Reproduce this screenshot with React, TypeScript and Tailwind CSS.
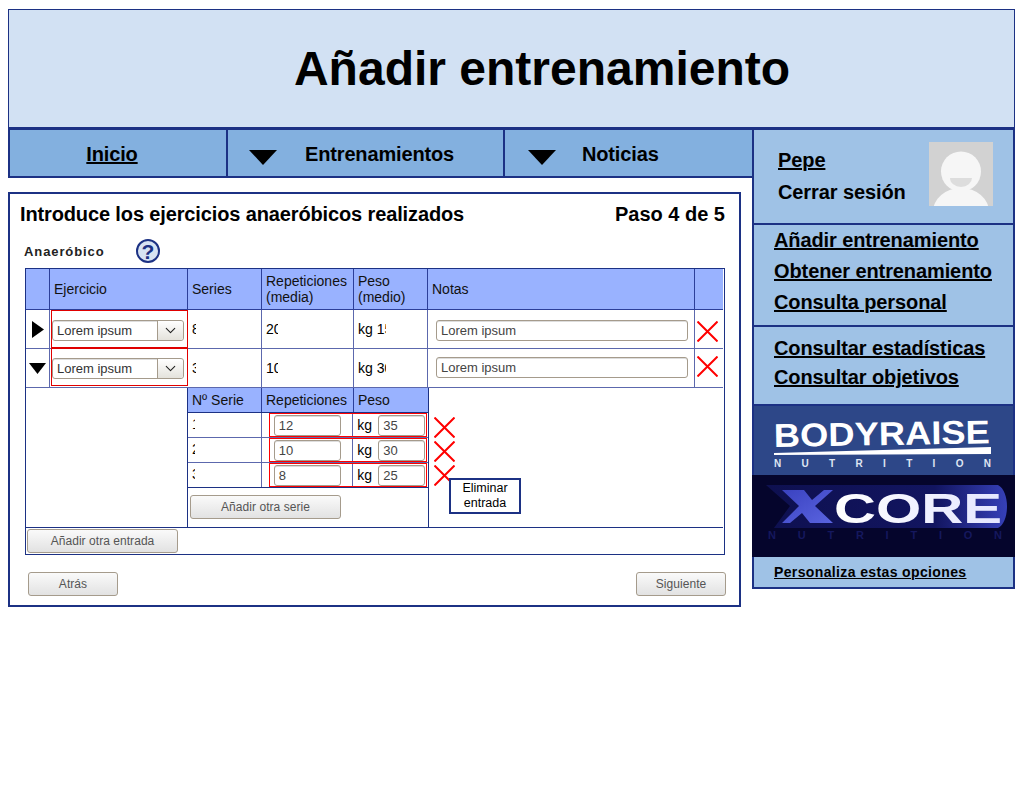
import React from 'react';
import { ChevronDown } from 'lucide-react';

const Cross = () => (
  <svg width="21" height="21" viewBox="0 0 21 21" className="block">
    <path d="M0.5 0.5 L20.5 20.5 M20.5 0.5 L0.5 20.5" stroke="#ff0000" strokeWidth="2" fill="none" />
  </svg>
);

const NavArrow = () => (
  <svg width="28" height="15" viewBox="0 0 28 15" className="block">
    <path d="M0 0 H28 L14 15 Z" fill="#000" />
  </svg>
);

const Select = () => (
  <div className="flex h-[21px] w-[132px] rounded-[3px] border border-[#a59b8c] bg-white text-[13px] text-[#333] shadow-[inset_0_1px_0_#ddd]">
    <span className="flex-1 pl-[4px] leading-[19px]">Lorem ipsum</span>
    <span className="flex w-[26px] items-center justify-center rounded-r-[3px] border-l border-[#a59b8c] bg-gradient-to-b from-white to-[#e4e2dc]">
      <ChevronDown size={17} strokeWidth={1.5} color="#222" />
    </span>
  </div>
);

const Input = ({ value, className }: { value: string; className: string }) => (
  <div className={`h-[21px] rounded-[3px] border border-[#a59b8c] bg-white pl-[4px] text-[13px] leading-[19px] text-[#444] shadow-[inset_0_1px_0_#ddd] ${className}`}>
    {value}
  </div>
);

const Button = ({ label, className }: { label: string; className: string }) => (
  <div className={`flex h-[24px] items-center justify-center rounded-[3px] border border-[#a59b8c] bg-gradient-to-b from-[#fafafa] to-[#e2e2e2] text-[12px] tracking-[0.05px] text-[#555] ${className}`}>
    {label}
  </div>
);

const Clipped = ({ text, w }: { text: string; w: string }) => (
  <span className={`block overflow-hidden whitespace-nowrap ${w}`}>{text}</span>
);

interface MainRowProps {
  arrow: React.ReactNode;
  series: string;
  reps: string;
  peso: string;
  boxClass: string;
  noteClass: string;
  crossClass: string;
}

const MainRow = ({ arrow, series, reps, peso, boxClass, noteClass, crossClass }: MainRowProps) => (
  <div className="flex h-[39px] border-b border-[#5c68ad] text-[14px] leading-[38px] text-black">
    <div className="flex w-[24px] items-center justify-center border-r border-[#5c68ad]">{arrow}</div>
    <div className="w-[138px] pl-[1px]">
      <div className={`relative border border-[#e00000] ${boxClass}`}>
        <Select />
      </div>
    </div>
    <div className="w-[74px] border-r border-[#5c68ad] pl-[4px]">
      <Clipped text={series} w="w-[4px]" />
    </div>
    <div className="w-[92px] border-r border-[#5c68ad] pl-[4px]">
      <Clipped text={reps} w="w-[12px]" />
    </div>
    <div className="w-[74px] border-r border-[#5c68ad] pl-[4px]">
      <Clipped text={peso} w="w-[28px]" />
    </div>
    <div className={`w-[267px] border-r border-[#5c68ad] pl-[8px] ${noteClass}`}>
      <Input value="Lorem ipsum" className="w-[252px]" />
    </div>
    <div className={`w-[28px] pl-[2px] ${crossClass}`}>
      <Cross />
    </div>
  </div>
);

const SubRow = ({ n, reps, peso, last }: { n: string; reps: string; peso: string; last?: boolean }) => (
  <div className={`relative flex h-[25px] border-b text-[14px] leading-[22px] text-black ${last ? 'border-[#1c3184]' : 'border-[#5c68ad]'}`}>
    <div className="w-[74px] border-r border-[#5c68ad] pl-[4px]">
      <Clipped text={n} w="w-[3px]" />
    </div>
    <div className="flex w-[92px] items-center border-r border-[#5c68ad] pl-[12px]">
      <Input value={reps} className="w-[67px]" />
    </div>
    <div className="flex w-[75px] items-center pl-[4px]">
      <span className="w-[21px] leading-[24px]">kg</span>
      <Input value={peso} className="w-[47px]" />
    </div>
    <div className="absolute left-[81px] right-[1px] top-0 h-[24px] border border-[#ff0000]" />
  </div>
);

const HeadCell = ({ w, children, last }: { w: string; children?: React.ReactNode; last?: boolean }) => (
  <div className={`${w} flex items-center pl-[4px] leading-[16px] ${last ? '' : 'border-r border-[#2c3f9a]'}`}>{children}</div>
);

const SideLink = ({ children }: { children: React.ReactNode }) => (
  <div className="text-[20px] font-bold tracking-[-0.1px] text-black underline">{children}</div>
);

export default function App() {
  return (
    <div className="min-h-[800px] bg-white pl-[8px] pt-[9px] font-['Liberation_Sans',Arial,sans-serif]">
      <header className="flex h-[119px] w-[1007px] items-center justify-center border border-[#1c3184] bg-[#d2e1f3] pl-[61px] pt-[1px] text-[48px] font-bold text-black">
        Añadir entrenamiento
      </header>

      <div className="flex w-[1007px]">
        <div className="w-[744px]">
          <nav className="flex h-[50px] border-2 border-r-0 border-[#1c3184] bg-[#83b0df] text-[20px] font-bold tracking-[-0.15px] text-black">
            <div className="flex w-[218px] items-center justify-center border-r-2 border-[#1c3184] pr-[12px] pt-[1px] underline">Inicio</div>
            <div className="flex w-[277px] items-center border-r-2 border-[#1c3184] pl-[21px] pt-[1px]">
              <span className="mt-[8px]"><NavArrow /></span>
              <span className="ml-[28px]">Entrenamientos</span>
            </div>
            <div className="flex flex-1 items-center pl-[23px] pt-[1px]">
              <span className="mt-[8px]"><NavArrow /></span>
              <span className="ml-[26px]">Noticias</span>
            </div>
          </nav>

          <section className="relative mt-[14px] h-[415px] w-[733px] border-2 border-[#1c3184] bg-white">
            <div className="flex justify-between pl-[10px] pr-[14px] pt-[6px] text-[20px] font-bold leading-[28px] text-black">
              <span className="tracking-[-0.13px]">Introduce los ejercicios anaeróbicos realizados</span>
              <span>Paso 4 de 5</span>
            </div>

            <div className="mt-[11px] flex h-[24px] items-center pl-[14px]">
              <span className="mt-[1px] w-[112px] text-[13px] font-bold tracking-[0.9px] text-[#222]">Anaeróbico</span>
              <svg width="24" height="24" viewBox="0 0 24 24" className="block">
                <circle cx="12" cy="12" r="11" fill="#d7e3f3" stroke="#1c3184" strokeWidth="2" />
                <text x="12" y="19.5" textAnchor="middle" fontSize="21" fontWeight="700" fill="#1c3184" fontFamily="Liberation Sans">?</text>
              </svg>
            </div>

            <div className="ml-[15px] mt-[5px] w-[700px] border border-[#1c3184] pr-[1px]">
              <div className="flex h-[41px] w-[697px] border-b border-[#2c3f9a] bg-[#99b2ff] text-[14px] text-[#111]">
                <HeadCell w="w-[24px]" />
                <HeadCell w="w-[138px]">Ejercicio</HeadCell>
                <HeadCell w="w-[74px]">Series</HeadCell>
                <HeadCell w="w-[92px]">Repeticiones<br />(media)</HeadCell>
                <HeadCell w="w-[74px]">Peso<br />(medio)</HeadCell>
                <HeadCell w="w-[267px]">Notas</HeadCell>
                <HeadCell w="w-[28px]" last />
              </div>
              <div className="w-[697px]">
                <MainRow
                  arrow={
                    <svg width="12" height="17" viewBox="0 0 12 17" className="block">
                      <path d="M0 0 L12 8.5 L0 17 Z" fill="#000" />
                    </svg>
                  }
                  series="8"
                  reps="20"
                  peso="kg 15"
                  boxClass="h-[38px] pt-[9px]"
                  noteClass="pt-[10px]"
                  crossClass="pt-[11px]"
                />
                <MainRow
                  arrow={
                    <svg width="17" height="11" viewBox="0 0 17 11" className="block">
                      <path d="M0 0 H17 L8.5 11 Z" fill="#000" />
                    </svg>
                  }
                  series="3"
                  reps="10"
                  peso="kg 30"
                  boxClass="-mt-[1px] h-[38px] pt-[9px]"
                  noteClass="pt-[8px]"
                  crossClass="pt-[7px]"
                />
              </div>

              <div className="relative flex h-[140px] border-b border-[#1c3184]">
                <div className="w-[162px] border-r border-[#1c3184]" />
                <div className="w-[241px] border-r border-[#1c3184]">
                  <div className="flex h-[25px] border-b border-[#1c3184] bg-[#99b2ff] text-[14px] leading-[24px] text-[#111]">
                    <div className="w-[74px] border-r border-[#2c3f9a] pl-[4px]">Nº Serie</div>
                    <div className="w-[92px] border-r border-[#2c3f9a] pl-[4px]">Repeticiones</div>
                    <div className="flex-1 pl-[4px]">Peso</div>
                  </div>
                  <SubRow n="1" reps="12" peso="35" />
                  <SubRow n="2" reps="10" peso="30" />
                  <SubRow n="3" reps="8" peso="25" last />
                  <div className="pl-[2px] pt-[7px]">
                    <Button label="Añadir otra serie" className="w-[151px]" />
                  </div>
                </div>
                <div className="flex flex-col gap-[3px] pl-[5px] pt-[29px]">
                  <Cross />
                  <Cross />
                  <Cross />
                </div>
                <div className="absolute left-[423px] top-[90px] flex h-[36px] w-[72px] items-center justify-center border-2 border-[#1c3184] bg-white text-center text-[12.5px] leading-[15px] text-black">
                  Eliminar<br />entrada
                </div>
              </div>

              <div className="h-[26px] pl-[1px] pt-[1px]">
                <Button label="Añadir otra entrada" className="w-[151px]" />
              </div>
            </div>

            <div className="flex w-[716px] justify-between pl-[18px] pt-[17px]">
              <Button label="Atrás" className="w-[90px]" />
              <Button label="Siguiente" className="w-[90px]" />
            </div>
          </section>
        </div>

        <aside className="w-[263px] self-start border-2 border-[#1c3184] bg-[#9fc2e6]">
          <div className="flex h-[95px] border-b-2 border-[#1c3184] pl-[24px] pt-[12px]">
            <div className="w-[151px] pt-[2px] text-[20px] font-bold leading-[32px] tracking-[-0.1px] text-black">
              <div className="underline">Pepe</div>
              <div>Cerrar sesión</div>
            </div>
            <svg width="64" height="64" viewBox="0 0 64 64" className="block">
              <rect width="64" height="64" fill="#d2d2d2" />
              <ellipse cx="32" cy="70" rx="28" ry="24" fill="#f6f6f6" />
              <circle cx="32" cy="29.5" r="20" fill="#f6f6f6" />
              <path d="M21 36 H43 A11 9 0 0 1 21 36 Z" fill="#dddddd" />
            </svg>
          </div>
          <div className="h-[102px] border-b-2 border-[#1c3184] pl-[20px] leading-[31px]">
            <SideLink>Añadir entrenamiento</SideLink>
            <SideLink>Obtener entrenamiento</SideLink>
            <SideLink>Consulta personal</SideLink>
          </div>
          <div className="h-[79px] border-b-2 border-[#1c3184] pl-[20px] pt-[7px] leading-[29px]">
            <SideLink>Consultar estadísticas</SideLink>
            <SideLink>Consultar objetivos</SideLink>
          </div>
          <svg width="259" height="69" viewBox="0 0 259 69" className="block bg-[#2d4788]">
            <text x="20" y="41" fontFamily="Liberation Sans" fontWeight="700" fontSize="33" fill="#fff" textLength="216" lengthAdjust="spacingAndGlyphs" transform="rotate(-1 20 41)">BODYRAISE</text>
            <path d="M20 47 L237 41 V48 L20 49 Z" fill="#fff" />
            <text x="20" y="61" fontFamily="Liberation Sans" fontWeight="700" fontSize="10" fill="#dfe5f2" textLength="217">NUTRITION</text>
          </svg>
          <svg width="263" height="82" viewBox="0 0 263 82" className="-mx-[2px] block max-w-none bg-[#05052c]">
            <defs>
              <linearGradient id="xcoreBand" x1="0" y1="0" x2="1" y2="0">
                <stop offset="0" stopColor="#0e1050" />
                <stop offset="0.7" stopColor="#121560" />
                <stop offset="1" stopColor="#3640b8" />
              </linearGradient>
              <linearGradient id="xcoreX" x1="0" y1="0" x2="1" y2="1">
                <stop offset="0" stopColor="#3a42c0" />
                <stop offset="1" stopColor="#5a64e0" />
              </linearGradient>
              <linearGradient id="xcoreText" x1="0" y1="0" x2="1" y2="0">
                <stop offset="0" stopColor="#ffffff" />
                <stop offset="1" stopColor="#e4e6ff" />
              </linearGradient>
            </defs>
            <path d="M14 10 H246 C258 16 258 47 246 53 H22 L38 31 Z" fill="url(#xcoreBand)" />
            <path d="M30 15 H52 L60 25 L72 15 H81 L63 31 L81 48 H58 L50 38 L38 48 H30 L47 31 Z" fill="url(#xcoreX)" />
            <text x="82" y="48" fontFamily="Liberation Sans" fontWeight="700" fontSize="43" fill="url(#xcoreText)" textLength="168" lengthAdjust="spacingAndGlyphs">CORE</text>
            <text x="16" y="64" fontFamily="Liberation Sans" fontWeight="700" fontSize="11" fill="#15185e" textLength="234">NUTRITION</text>
          </svg>
          <div className="h-[30px] pl-[20px] pt-[5px] text-[14px] font-bold leading-[20px] tracking-[0.37px] text-black underline">
            Personaliza estas opciones
          </div>
        </aside>
      </div>
    </div>
  );
}
